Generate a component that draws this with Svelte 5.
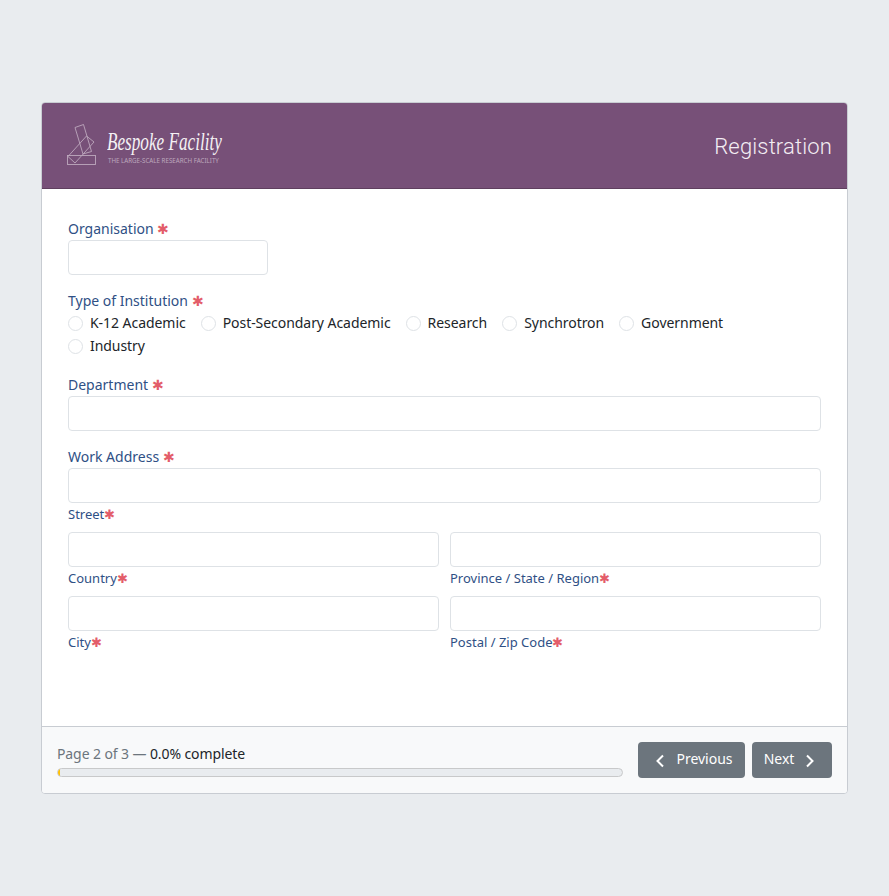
<script>
  const institutions = ['K-12 Academic', 'Post-Secondary Academic', 'Research', 'Synchrotron', 'Government', 'Industry'];
</script>

<div class="page">
  <div class="card">
    <header class="head">
      <div class="logo">
        <svg class="mark" width="32" height="44" viewBox="0 0 32 44" fill="none" stroke="#bda8bd" stroke-width="0.9">
          <rect x="1.5" y="31.5" width="28" height="9" />
          <path d="M9 3.5 L17.5 0.5 L25.5 27.5 L17 30 Z" />
          <path d="M20.5 12 L28 18 L9 39 L2 32.5 Z" />
        </svg>
        <div class="wordmark">
          <span class="script">Bespoke Facility</span>
          <span class="tag">THE LARGE-SCALE RESEARCH FACILITY</span>
        </div>
      </div>
      <h1>Registration</h1>
    </header>

    <form class="body">
      <div class="field">
        <div class="label">Organisation <span class="req">✱</span></div>
        <div class="input short"></div>
      </div>

      <div class="field">
        <div class="label">Type of Institution <span class="req">✱</span></div>
        <div class="radios">
          {#each institutions as name}
            <div class="radio"><span class="dot"></span>{name}</div>
          {/each}
        </div>
      </div>

      <div class="field">
        <div class="label">Department <span class="req">✱</span></div>
        <div class="input"></div>
      </div>

      <div class="field">
        <div class="label">Work Address <span class="req">✱</span></div>
        <div class="input"></div>
        <div class="sub">Street<span class="req">✱</span></div>
        <div class="cols">
          <div>
            <div class="input"></div>
            <div class="sub">Country<span class="req">✱</span></div>
          </div>
          <div>
            <div class="input"></div>
            <div class="sub">Province / State / Region<span class="req">✱</span></div>
          </div>
          <div>
            <div class="input"></div>
            <div class="sub">City<span class="req">✱</span></div>
          </div>
          <div>
            <div class="input"></div>
            <div class="sub">Postal / Zip Code<span class="req">✱</span></div>
          </div>
        </div>
      </div>
    </form>

    <footer class="foot">
      <div class="progress">
        <div class="status">Page 2 of 3 — <span>0.0% complete</span></div>
        <div class="bar"><div class="fill"></div></div>
      </div>
      <div class="buttons">
        <button type="button" class="btn prev">
          <svg width="10" height="14" viewBox="0 0 10 14" fill="none" stroke="#fff" stroke-width="2"><path d="M8 1.5 L2.5 7 L8 12.5" /></svg>
          <span>Previous</span>
        </button>
        <button type="button" class="btn next">
          <span>Next</span>
          <svg width="10" height="14" viewBox="0 0 10 14" fill="none" stroke="#fff" stroke-width="2"><path d="M2 1.5 L7.5 7 L2 12.5" /></svg>
        </button>
      </div>
    </footer>
  </div>
</div>

<style>
  :global(body) {
    background: #e9ecef;
    font-family: "Noto Sans", "Open Sans", sans-serif;
  }

  .page {
    padding: 102px 41px;
  }

  .card {
    background: #fff;
    border: 1px solid #c8ccd2;
    border-radius: 4px;
    overflow: hidden;
  }

  .head {
    height: 86px;
    box-sizing: border-box;
    background: #775078;
    border-bottom: 1px solid #5f3f5e;
    display: flex;
    align-items: center;
    justify-content: space-between;
    padding: 0 15px 0 24px;
  }

  .head h1 {
    margin: 2px 0 0;
    font-family: Roboto, "Noto Sans", sans-serif;
    font-size: 22px;
    font-weight: 300;
    letter-spacing: 0.15px;
    color: #f3edf3;
  }

  .logo {
    display: flex;
    align-items: flex-end;
    gap: 9px;
  }

  .mark {
    display: block;
  }

  .wordmark {
    width: 116px;
    display: flex;
    flex-direction: column;
    color: #fff;
    margin-bottom: 3px;
  }

  .script {
    font-family: "Liberation Serif", serif;
    font-style: italic;
    font-size: 26px;
    line-height: 30px;
    white-space: nowrap;
    transform: scaleX(0.66);
    transform-origin: left;
    opacity: 0.92;
  }

  .tag {
    font-size: 6.2px;
    line-height: 8px;
    color: #bda8bd;
    margin-left: 1px;
    white-space: nowrap;
  }

  .body {
    height: 537px;
    box-sizing: border-box;
    padding: 30px 26px 0;
  }

  .field {
    margin-bottom: 16px;
  }

  .label {
    font-size: 14px;
    line-height: 19px;
    padding-bottom: 2px;
    color: #2f5085;
  }

  .req {
    color: #e35d6a;
  }

  .input {
    height: 35px;
    box-sizing: border-box;
    border: 1px solid #dee2e6;
    border-radius: 4px;
    background: #fff;
  }

  .short {
    width: 200px;
  }

  .radios {
    display: flex;
    flex-wrap: wrap;
    row-gap: 1px;
    column-gap: 15px;
    padding: 0 90px 2px 0;
  }

  .radio {
    display: flex;
    align-items: center;
    gap: 7px;
    height: 22px;
    box-sizing: border-box;
    padding-bottom: 2px;
    font-size: 14px;
    letter-spacing: -0.05px;
    color: #212529;
  }

  .dot {
    width: 15px;
    height: 15px;
    margin-top: 2px;
    box-sizing: border-box;
    border: 1px solid #dee2e6;
    border-radius: 50%;
  }

  .sub {
    font-size: 13px;
    line-height: 18px;
    padding: 2px 0 9px;
    color: #2f5085;
  }

  .cols {
    display: grid;
    grid-template-columns: 1fr 1fr;
    column-gap: 11px;
  }

  .foot {
    height: 67px;
    box-sizing: border-box;
    background: #f8f9fa;
    border-top: 1px solid #c8ccd2;
    display: flex;
    align-items: flex-start;
    gap: 15px;
    padding: 15px 15px 0;
  }

  .progress {
    flex: 1;
  }

  .status {
    font-size: 14px;
    line-height: 24px;
    letter-spacing: -0.1px;
    color: #6c757d;
  }

  .status span {
    color: #212529;
  }

  .bar {
    height: 9px;
    margin-top: 2px;
    box-sizing: border-box;
    background: #e9ecef;
    border: 1px solid #c8c9ca;
    border-radius: 5px;
    overflow: hidden;
  }

  .fill {
    width: 2px;
    height: 100%;
    background: #ffc107;
  }

  .buttons {
    display: flex;
    gap: 7px;
  }

  .btn {
    height: 36px;
    border: none;
    border-radius: 4px;
    background: #6c757d;
    color: #fff;
    font-family: inherit;
    font-size: 14px;
    display: flex;
    align-items: center;
    justify-content: center;
    gap: 11px;
    padding: 0;
  }

  .btn span {
    padding-bottom: 3px;
  }

  .btn svg {
    margin-top: 2px;
  }

  .prev {
    width: 107px;
    padding-left: 5px;
  }

  .next {
    width: 80px;
    padding-right: 5px;
  }
</style>
